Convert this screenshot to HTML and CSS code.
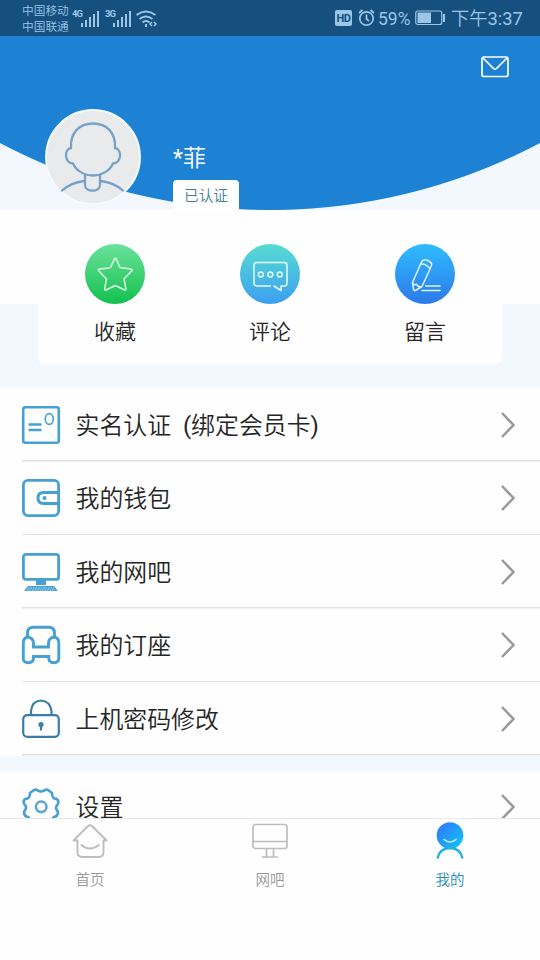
FILE: index.html
```html
<!DOCTYPE html>
<html lang="zh-CN">
<head>
<meta charset="utf-8">
<title>我的</title>
<link rel="stylesheet" href="styles.css">
</head>
<body>
<div class="app">
  <header class="status">
    <div class="carriers"><span>中国移动</span><span>中国联通</span></div>
    <svg class="signals" width="88" height="24" viewBox="0 0 88 24" fill="none" stroke="#9cc6e8" stroke-width="2">
      <path d="M10 18v4M14 15v7M18 12v10M22 9v13M26 6v16" transform="translate(0 -1)"/>
      <path d="M43 18v4M47 15v7M51 12v10M55 9v13M59 6v16" transform="translate(-1 -1)"/>
      <path d="M64.500 9q9.500-7 19 0M67.500 13q6.500-5 13 0M70.500 16.500q3.500-3 7 0"/>
      <path d="M74 18v3" />
      <path d="M80 16l-2 2 2 2M82 16l2 2-2 2" stroke-width="1.500"/>
      <text x="0" y="11" class="net">4G</text>
      <text x="33" y="11" class="net">3G</text>
    </svg>
    <span class="spacer"></span>
    <span class="hd">HD</span>
    <svg class="alarm" width="17" height="18" viewBox="0 0 17 18" fill="none" stroke="#9cc6e8" stroke-width="1.700">
      <circle cx="8.500" cy="9.500" r="6.700"/><path d="M8.500 5.500v4.500l2.500 2M1 4l3.500-3M16 4l-3.500-3"/>
    </svg>
    <span class="pct">59%</span>
    <svg class="battery" width="31" height="16" viewBox="0 0 31 16">
      <rect x=".75" y="1" width="26" height="13.500" rx="2" fill="none" stroke="#9cc6e8" stroke-width="1.200"/>
      <path d="M2.500 2.500H16V13H2.500zM28 4h2v8h-2z" fill="#9cc6e8"/>
    </svg>
    <span class="time">下午<span class="latin">3:37</span></span>
  </header>

  <section class="hero">
    <svg class="mail" width="28" height="22" viewBox="0 0 28 22" fill="none" stroke="#fff" stroke-width="1.700" stroke-linejoin="round">
      <rect x="1" y="1" width="26" height="19.500" rx="2"/><path d="M2 2l10.500 10.500q1.500 1.400 3 0L26 2"/>
    </svg>
    <div class="profile">
      <svg class="avatar" width="96" height="96" viewBox="0 0 96 96">
        <circle cx="48" cy="48" r="47" fill="#e9eaec" stroke="#f3fbff" stroke-width="1.800"/>
        <g fill="none" stroke="#76a2ca" stroke-width="2.300" stroke-linecap="round" stroke-linejoin="round">
          <path d="M26 39C25 24 34 14.500 48 14.500S71 24 70 39c7 1 7 15-2 15.500-3 7-11 12-20 12s-17-5-20-12C19 54 19 40 26 39"/>
          <path d="M40 66v10c0 7.500 15 7.500 15 0V66M39 72c-8 1-15 3.500-22 9.500M56 72c8 1 15 3.500 22 9.500"/>
        </g>
      </svg>
      <div class="who"><span class="name"><span class="latin">*</span>菲</span><span class="badge">已认证</span></div>
    </div>
  </section>

  <section class="shortcuts">
    <div class="card">
      <div class="shortcut"><span class="disc green">
        <svg width="60" height="60" viewBox="0 0 60 60" fill="none" stroke="#dcfbe5" stroke-width="1.500" stroke-linejoin="round" stroke-linecap="round"><path d="M25.500 23.500l3.800-8.300q1-1.800 2 0l3.700 8.300 10.800 1.500q2.300.5.700 2.100L39 35l1.900 9.700q.2 1.900-1.600 1.100L30.300 41.500l-9 4.300q-1.800.8-1.600-1.100L21.500 35l-7.600-7.900q-1.500-1.600.6-2.100l7.500-.8 2-.2"/></svg>
      </span><span>收藏</span></div>
      <div class="shortcut"><span class="disc teal">
        <svg width="60" height="60" viewBox="0 0 60 60" fill="none" stroke="#e4fbff" stroke-width="1.500" stroke-linejoin="round" stroke-linecap="round"><path d="M30.500 42H17q-3 0-3-3V21.500q0-3 3-3h27q3 0 3 3V39q0 3-3 3h-3v4.500L34 42"/><circle cx="20.800" cy="30.500" r="2.400"/><circle cx="30.300" cy="30.500" r="2.400"/><circle cx="39.800" cy="30.500" r="2.400"/></svg>
      </span><span>评论</span></div>
      <div class="shortcut"><span class="disc blue">
        <svg width="60" height="60" viewBox="0 0 60 60" fill="none" stroke="#e0f4ff" stroke-width="1.500" stroke-linejoin="round" stroke-linecap="round"><path d="M17.500 38.500L26.500 18q1.500-3 5-2l3 1.500q3 1.500 1.800 4.500L27 42.500l-6.500 4q-2 .5-2-1.500zM17.500 38.500q1 3 4 1.800 1.500 3.500 5.500 2.200M25.500 20.500q4-2 9.500 4M30.500 42H45M27 46.500h18"/></svg>
      </span><span>留言</span></div>
    </div>
  </section>

  <main class="menu">
    <div class="row">
      <svg class="ico" viewBox="0 0 38 38"><rect x="1.200" y="1.200" width="35.600" height="35.600" rx="2"/><ellipse cx="27.300" cy="13" rx="4" ry="5.300" stroke-width="1.700"/><path d="M6.500 18.500h13M6.500 24h13"/></svg>
      <span class="label">实名认证<span class="latin">&nbsp; (</span>绑定会员卡<span class="latin">)</span></span>
      <svg class="chev" viewBox="0 0 14 26"><path d="M1 1l11.500 12L1 25"/></svg>
    </div>
    <div class="row">
      <svg class="ico" viewBox="0 0 38 38"><rect x="1.400" y="1.400" width="35.200" height="35.200" rx="4.500" stroke-width="2.800"/><path d="M36 13.500H21.500q-5.500 0-5.500 5.500t5.500 5.500H36" stroke-width="3"/><circle cx="22.500" cy="19" r="2" fill="#47a0d3" stroke="none"/></svg>
      <span class="label">我的钱包</span>
      <svg class="chev" viewBox="0 0 14 26"><path d="M1 1l11.500 12L1 25"/></svg>
    </div>
    <div class="row">
      <svg class="ico" viewBox="0 0 38 38"><rect x="1.400" y="1.400" width="35.200" height="25" rx="2.500" stroke-width="2.800"/><path d="M14 27h10v5H14z" fill="#47a0d3" stroke="none"/><path d="M6 33h26l4 5H2z" fill="#47a0d3" stroke="none"/><path d="M6 35h26M5 37h28" stroke="#d9eef9" stroke-width=".8" stroke-dasharray="1.500 1"/></svg>
      <span class="label">我的网吧</span>
      <svg class="chev" viewBox="0 0 14 26"><path d="M1 1l11.500 12L1 25"/></svg>
    </div>
    <div class="row">
      <svg class="ico seat" viewBox="0 0 38 38"><path d="M5.500 11V7q0-5.700 6-5.700h15q6 0 6 5.700v4M5.500 11q5.500.5 6 6v4h15V17q.5-5.500 6-6 4.300 1 4.300 6v15q0 4.700-5 4.700t-5-4.700v-1.500H11.500V32q0 4.700-5.200 4.700T1.300 32V17q0-5 4.200-6"/></svg>
      <span class="label">我的订座</span>
      <svg class="chev" viewBox="0 0 14 26"><path d="M1 1l11.500 12L1 25"/></svg>
    </div>
    <div class="row">
      <svg class="ico lock" viewBox="0 0 38 38"><rect x="1.200" y="15.200" width="35.600" height="21.600" rx="4"/><path d="M9 15v-4q1-10 10-10.500 9 .5 10.500 10.500v4M19 25v5.500"/><circle cx="19" cy="24.500" r="2.600" fill="#397ea9" stroke="none"/></svg>
      <span class="label">上机密码修改</span>
      <svg class="chev" viewBox="0 0 14 26"><path d="M1 1l11.500 12L1 25"/></svg>
    </div>
    <div class="row settings">
      <svg class="ico" viewBox="0 0 38 38"><path d="M8 5l4-3q2.500-1 4 .7 3 1.600 6 0 1.500-1.700 4-.7l4 3q0 4.500 2.500 5.500 3.500 0 4 3.500-.5 2.500-2 4-.8 2 0 3.500 1.500 1.500 1.500 4-1 3-4 3.500-2 1-2 5l-4 3q-2.500 1-4-.7-3-1.600-6 0-1.500 1.700-4 .7l-4-3q0-4-2-5-3-.5-4-3.500q0-2.500 1.500-4 .8-2 0-4Q2 16.500 1.500 14q.5-3.500 4-3.500Q8 9.500 8 5z" stroke-linejoin="round"/><circle cx="19.200" cy="18.800" r="5.300" stroke="#5fa6ca"/></svg>
      <span class="label">设置</span>
      <svg class="chev" viewBox="0 0 14 26"><path d="M1 1l11.500 12L1 25"/></svg>
    </div>
  </main>

  <nav class="tabs">
    <div class="tab">
      <svg width="36" height="38" viewBox="0 0 36 38" fill="none" stroke="#bdbdbd" stroke-width="1.900" stroke-linejoin="round" stroke-linecap="round"><path d="M5 19.500H1.500L16 5q2-1.500 4 0l14.500 14.500H31.500V31q0 5-5 5h-16q-5 0-5-5V19.500M9.500 24q8 7 17.500 0"/></svg>
      <span>首页</span>
    </div>
    <div class="tab">
      <svg width="36" height="38" viewBox="0 0 36 38" fill="none" stroke="#bdbdbd" stroke-width="1.700" stroke-linecap="round"><rect x="1" y="3.500" width="34" height="24" rx="2.500"/><path d="M1 20.500h34M14.500 28v7.500M21.500 28v7.500M10.500 36h15"/></svg>
      <span>网吧</span>
    </div>
    <div class="tab active">
      <svg width="36" height="38" viewBox="0 0 36 38"><defs><linearGradient id="me" x1="0" y1="0" x2="1" y2="1"><stop offset=".2" stop-color="#2b83ff"/><stop offset="1" stop-color="#10c9f4"/></linearGradient></defs><circle cx="18" cy="14.500" r="13.300" fill="url(#me)"/><path d="M12 18.500q6 5 12 0" fill="none" stroke="#c9f4ff" stroke-width="1.600" stroke-linecap="round"/><path d="M5.500 37.500Q7.500 27.300 18 27 28.500 27.300 30.500 37.500" fill="none" stroke="#27aede" stroke-width="2.400"/></svg>
      <span>我的</span>
    </div>
  </nav>
</div>
</body>
</html>
```
FILE: styles.css
```css
* { box-sizing: border-box; }
body { margin: 0; font-family: Roboto, "Noto Sans CJK SC", sans-serif; font-weight: 350; color: #252525; background: #fdfdfd; }
svg { display: block; flex: none; }
.latin { font-weight: 400; }
.app { width: 540px; height: 960px; overflow: hidden; display: flex; flex-direction: column; background: #f3f8fe; white-space: nowrap; }

.status { height: 36px; flex: none; display: flex; align-items: center; padding: 0 18px 0 22px; background: #15507f; color: #9cc6e8; }
.carriers { display: flex; flex-direction: column; width: 50px; padding-top: 2px; font-size: 11.700px; line-height: 16.500px; }
.net { font: 700 9.500px "Roboto", sans-serif; fill: #9cc6e8; stroke: none; letter-spacing: -1px; }
.spacer { flex: 1; }
.hd { width: 17px; height: 16px; border-radius: 2px; background: #9cc6e8; color: #15507f; font-size: 11px; font-weight: 700; line-height: 17px; text-align: center; letter-spacing: -.5px; }
.alarm { margin-left: 6px; }
.pct { margin-left: 3px; width: 33px; font-size: 17.500px; font-weight: 400; line-height: 36px; padding-top: 2px; }
.battery { margin-left: 4px; }
.time { width: 71px; margin-left: 5px; font-size: 18.300px; line-height: 36px; padding-top: 2px; }

.hero { height: 174px; flex: none; background: radial-gradient(circle 577.500px at 270px -403.500px, #1d82d4 577px, #f3f8ff 578px); display: flex; flex-direction: column; }
.mail { margin: 20px 0 0 481px; }
.profile { display: flex; padding: 31px 0 0 45px; }
.who { display: flex; flex-direction: column; align-items: flex-start; margin-left: 32px; color: #fff; }
.name { height: 39px; margin-top: 32px; font-size: 23px; line-height: 36px; }
.badge { width: 66px; height: 30px; border-radius: 4px 4px 0 0; background: #fff; color: #47808f; font-size: 14.700px; line-height: 32px; text-align: center; }

.shortcuts { height: 178px; flex: none; padding: 0 38px; background: linear-gradient(#fefefe 94px, #f3f8fe 94px); }
.card { height: 154px; padding-top: 34px; background: #fefefe; border-radius: 0 0 6px 6px; display: grid; grid-template-columns: repeat(3, 155px); }
.shortcut { display: flex; flex-direction: column; align-items: center; width: 154px; font-size: 21px; line-height: 30px; gap: 13px; }
.disc { width: 60px; height: 60px; border-radius: 50%; }
.green { background: linear-gradient(#6ae29b, #14c04e); }
.teal { background: linear-gradient(#57dcd3, #3c9ff0); }
.blue { background: linear-gradient(#2fbcff, #2c79e8); }

.menu { flex: 1; min-height: 0; overflow: hidden; }
.row { height: 73.500px; display: flex; align-items: center; background: linear-gradient(#dfe1e5, #dfe1e5) right bottom / 518px 1.500px no-repeat, #fefefe; padding: 0 25px 0 22px; }
.ico { width: 38px; height: 38px; fill: none; stroke: #47a0d3; stroke-width: 2.600; overflow: visible; }
.seat { stroke-width: 2.900; }
.lock { stroke: #397ea9; stroke-width: 2.200; }
.label { flex: 1; margin-left: 15.500px; padding-top: 2px; font-size: 23.900px; line-height: 40px; }
.chev { width: 14px; height: 26px; fill: none; stroke: #999; stroke-width: 2.500; }
.settings { height: 70px; margin-top: 16px; background: #fefefe; }

.tabs { height: 142px; flex: none; display: grid; grid-template-columns: repeat(3, 180px); background: #fefefe; border-top: 1px solid #e8e8e8; }
.tab { display: flex; flex-direction: column; align-items: center; padding-top: 2px; font-size: 14.500px; line-height: 20px; gap: 12px; color: #9a9a9a; }
.active { color: #278fba; }
```
